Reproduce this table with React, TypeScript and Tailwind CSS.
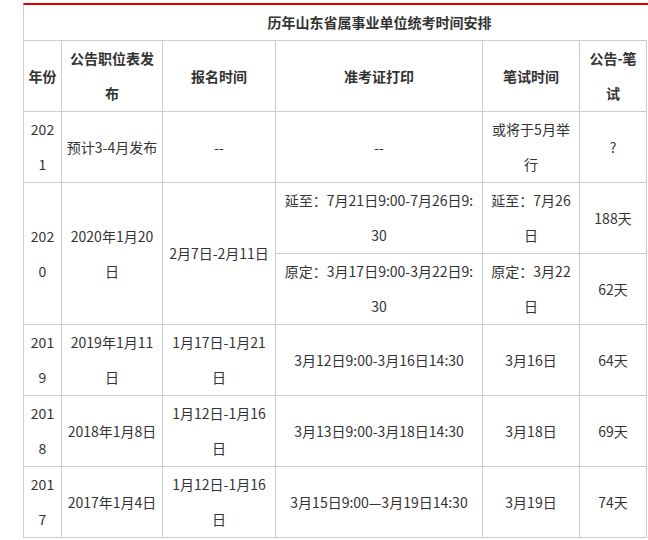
import React from 'react'

type Row = {
  year: string
  notice: string
  signup: string
  ticket: string
  exam: string
  days: string
}

// line breaks follow the source page, whose font wraps a little earlier
const rows: Row[] = [
  { year: '2019', notice: '2019年1月11\n日', signup: '1月17日-1月21\n日', ticket: '3月12日9:00-3月16日14:30', exam: '3月16日', days: '64天' },
  { year: '2018', notice: '2018年1月8日', signup: '1月12日-1月16\n日', ticket: '3月13日9:00-3月18日14:30', exam: '3月18日', days: '69天' },
  { year: '2017', notice: '2017年1月4日', signup: '1月12日-1月16\n日', ticket: '3月15日9:00—3月19日14:30', exam: '3月19日', days: '74天' },
]

const td = 'border border-[#cccccc] px-[4px] py-0 text-center align-middle break-all whitespace-pre-line'
const th = td + ' font-bold'

export default function App() {
  return (
    <div
      className="w-full overflow-hidden bg-white text-[14px] leading-[35px] text-[#333333]"
      style={{ fontFamily: '"Microsoft YaHei", "Noto Sans CJK SC", "Noto Sans", sans-serif' }}
    >
      <div className="pl-[23px] pt-[3px]">
        {/* title row is wider than the table under it, as on the source page */}
        <div className="w-[712px] h-[37px] border-t-2 border-l border-t-[#e00000] border-l-[#cccccc] text-center font-bold">
          历年山东省属事业单位统考时间安排
        </div>
        <table className="w-[624px] table-fixed border-collapse">
          <colgroup>
            <col className="w-[38px]" />
            <col className="w-[101px]" />
            <col className="w-[113px]" />
            <col className="w-[207px]" />
            <col className="w-[97px]" />
            <col className="w-[67px]" />
          </colgroup>
          <tbody>
            <tr>
              <td className={th}>年份</td>
              <td className={th}>{'公告职位表发\n布'}</td>
              <td className={th}>报名时间</td>
              <td className={th}>准考证打印</td>
              <td className={th}>笔试时间</td>
              <td className={th}>{'公告-笔\n试'}</td>
            </tr>
            <tr>
              <td className={td}>{'202\n1'}</td>
              <td className={td}>预计3-4月发布</td>
              <td className={td}>--</td>
              <td className={td}>--</td>
              <td className={td}>{'或将于5月举\n行'}</td>
              <td className={td}>?</td>
            </tr>
            <tr>
              <td className={td} rowSpan={2}>{'202\n0'}</td>
              <td className={td} rowSpan={2}>{'2020年1月20\n日'}</td>
              <td className={td} rowSpan={2}>2月7日-2月11日</td>
              <td className={td}>{'延至：7月21日9:00-7月26日9:\n30'}</td>
              <td className={td}>{'延至：7月26\n日'}</td>
              <td className={td}>188天</td>
            </tr>
            <tr>
              <td className={td}>{'原定：3月17日9:00-3月22日9:\n30'}</td>
              <td className={td}>{'原定：3月22\n日'}</td>
              <td className={td}>62天</td>
            </tr>
            {rows.map((r) => (
              <tr key={r.year}>
                <td className={td}>{r.year.slice(0, 3) + '\n' + r.year.slice(3)}</td>
                <td className={td}>{r.notice}</td>
                <td className={td}>{r.signup}</td>
                <td className={td}>{r.ticket}</td>
                <td className={td}>{r.exam}</td>
                <td className={td}>{r.days}</td>
              </tr>
            ))}
          </tbody>
        </table>
      </div>
    </div>
  )
}
